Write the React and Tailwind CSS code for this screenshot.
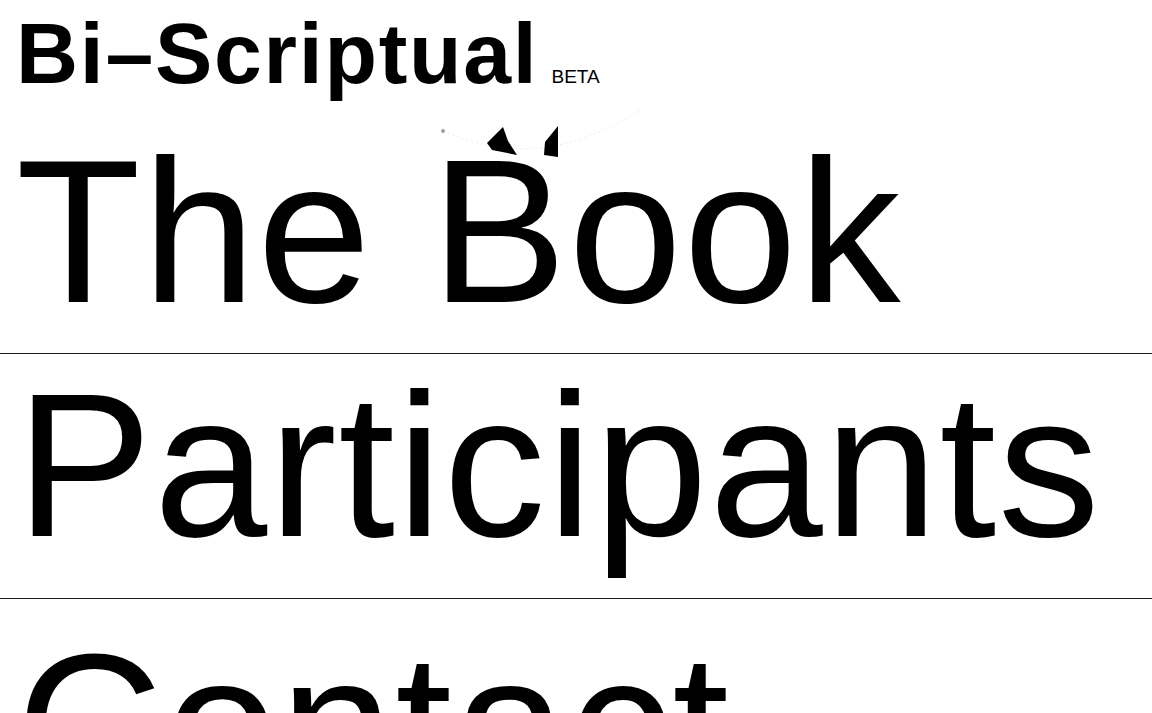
import React from 'react'

const links = [
    { label: 'The Book', pad: 'pt-[8px] pb-[20px]' },
    { label: 'Participants', pad: 'pt-[9px] pb-[31px]' },
    { label: 'Contact', pad: 'pt-[24px] pb-[31px]' },
]

function Glint() {
    // stray bit of the cover illustration poking out above "Book"
    return (
        <svg className="absolute left-[430px] top-[100px] pointer-events-none" width="230" height="70" viewBox="0 0 230 70">
            <path d="M13 31 Q 110 75 210 10" fill="none" stroke="#dcdcdc" strokeWidth="1" strokeDasharray="2 3" opacity="0.6" />
            <circle cx="13" cy="31" r="2" fill="#a0a0a0" />
            <path d="M73 27 L57 43 L62 50 L87 55 L78 41 Z" fill="#000" />
            <path d="M128 26 L115 42 L114 55 L128 57 Z" fill="#000" />
        </svg>
    )
}

export default function App() {
    return (
        <div className="relative min-h-screen overflow-hidden bg-white text-black font-['Liberation_Sans',Arial,sans-serif]">
            <header className="h-[121px] px-4 pt-[10px] flex items-baseline">
                <h1 className="text-[86px] leading-none font-bold tracking-[0.02em]">Bi–Scriptual</h1>
                <span className="ml-[13px] text-[19px] leading-none">BETA</span>
            </header>

            <nav className="flex flex-col">
                {links.map((l) => (
                    <a
                        key={l.label}
                        href="#"
                        className={`block px-4 border-b border-[#1a1a1a] text-[204px] leading-none tracking-[0.008em] whitespace-nowrap ${l.pad}`}
                    >
                        {l.label}
                    </a>
                ))}
            </nav>

            <Glint />
        </div>
    )
}
